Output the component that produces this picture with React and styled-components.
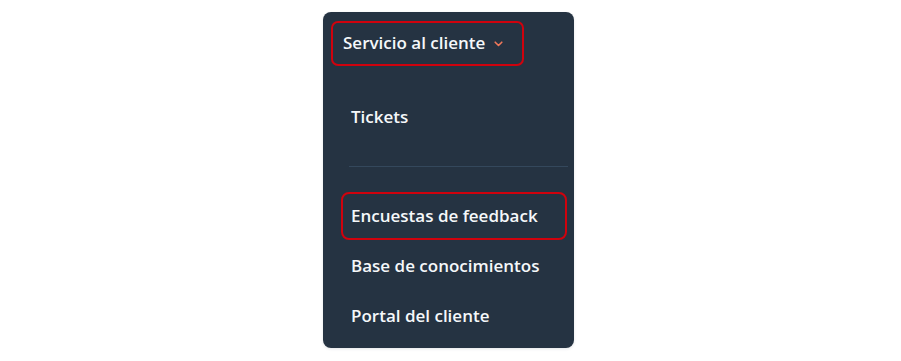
import React from "react";
import styled, { createGlobalStyle } from "styled-components";

const GlobalStyle = createGlobalStyle`
  html, body {
    margin: 0;
    padding: 0;
    background: #ffffff;
  }
  body {
    font-family: "Open Sans", "Liberation Sans", sans-serif;
  }
`;

const Page = styled.div`
  display: flex;
  justify-content: center;
  padding-top: 12px;
  padding-right: 4px;
  width: 901px;
  height: 361px;
  box-sizing: border-box;
`;

const Menu = styled.nav`
  width: 251px;
  height: 336px;
  box-sizing: border-box;
  background: #253342;
  border-radius: 8px;
  padding: 9px 7px 8px 8px;
  display: flex;
  flex-direction: column;
  box-shadow: 0 1px 3px rgba(37, 51, 66, 0.12);
`;

const Toggle = styled.button`
  display: flex;
  align-items: center;
  gap: 9px;
  width: 193px;
  height: 45px;
  box-sizing: border-box;
  padding: 0 0 3px 10px;
  border: 2px solid #d0020d;
  border-radius: 7px;
  background: transparent;
  color: #f5f8fa;
  font-family: inherit;
  font-size: 17px;
  font-weight: 600;
  letter-spacing: 0;
  cursor: pointer;
`;

const Chevron = styled.svg`
  width: 9px;
  height: 6px;
  margin-top: 3px;
`;

const List = styled.ul`
  list-style: none;
  margin: 27px 0 0 10px;
  padding: 0;
  display: flex;
  flex-direction: column;
  gap: 2px;
`;

const Item = styled.li`
  display: flex;
  align-items: center;
  height: 48px;
  box-sizing: border-box;
  padding: 0 0 1px 8px;
  border: 2px solid ${(p) => (p.$outlined ? "#d0020d" : "transparent")};
  border-radius: 8px;
  color: #f5f8fa;
  font-size: 17px;
  font-weight: 600;
  cursor: pointer;
`;

const Divider = styled.li`
  height: 1px;
  margin: 23px -1px 23px 8px;
  background: #34485c;
`;

export default function App() {
  return (
    <Page>
      <GlobalStyle />
      <Menu>
        <Toggle>
          Servicio al cliente
          <Chevron viewBox="0 0 9 6" fill="none">
            <path
              d="M1.2 1.2l3.3 3.3 3.3-3.3"
              stroke="#f0785a"
              strokeWidth="1.6"
              strokeLinecap="round"
              strokeLinejoin="round"
            />
          </Chevron>
        </Toggle>
        <List>
          <Item>Tickets</Item>
          <Divider />
          <Item $outlined>Encuestas de feedback</Item>
          <Item>Base de conocimientos</Item>
          <Item>Portal del cliente</Item>
        </List>
      </Menu>
    </Page>
  );
}
